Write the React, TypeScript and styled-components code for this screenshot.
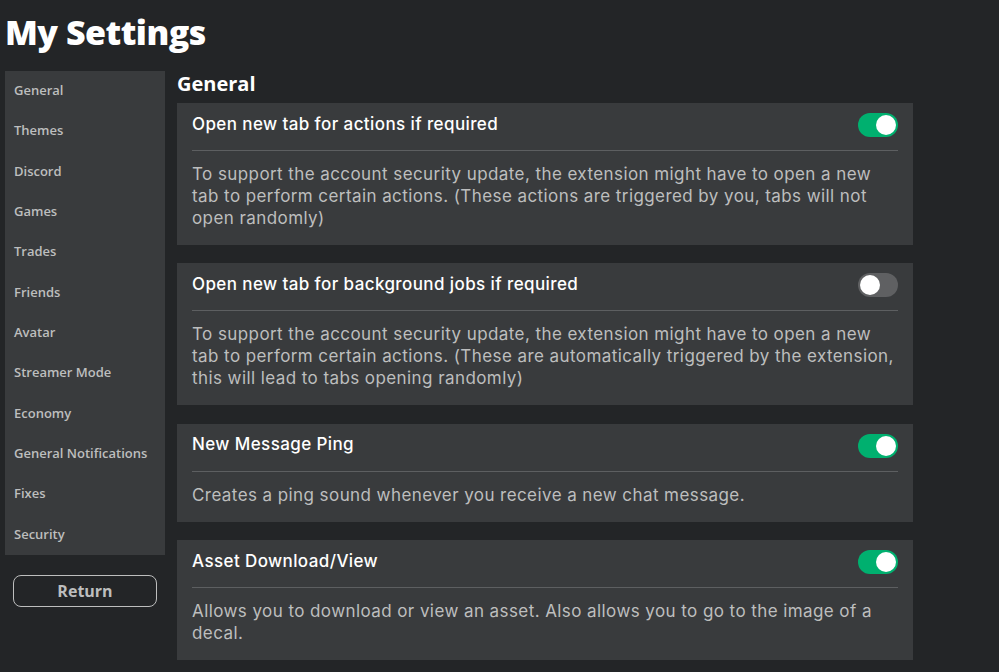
import React from "react";
import styled, { createGlobalStyle } from "styled-components";

const Global = createGlobalStyle`
  html, body { margin: 0; padding: 0; background: #232527; }
  body { font-family: "Inter", "Open Sans", "Liberation Sans", sans-serif; color: #fff; }
  * { box-sizing: border-box; }
`;

const Page = styled.div`
  width: 999px;
  height: 672px;
  overflow: hidden;
  padding: 10px 0 0 5px;
`;

const Title = styled.h1`
  margin: 0;
  height: 44px;
  font-family: "Open Sans", sans-serif;
  font-size: 34px;
  line-height: 44px;
  font-weight: 800;
  letter-spacing: -0.5px;
  color: #fff;
`;

const Layout = styled.div`
  display: flex;
  align-items: flex-start;
  margin-top: 17px;
  gap: 12px;
`;

const Side = styled.div`
  width: 160px;
  display: flex;
  flex-direction: column;
  gap: 20px;
`;

const Nav = styled.nav`
  background: #393b3d;
  display: flex;
  flex-direction: column;
`;

const NavItem = styled.div`
  height: 40.33px;
  line-height: 38px;
  padding: 0 9px;
  font-family: "Open Sans", sans-serif;
  font-size: 13px;
  font-weight: 600;
  color: #bdbebe;
`;

const ReturnButton = styled.button`
  margin-left: 8px;
  width: 144px;
  height: 32px;
  background: transparent;
  border: 1px solid #bdbebe;
  border-radius: 8px;
  color: #bdbebe;
  font-family: "Open Sans", sans-serif;
  font-size: 16px;
  font-weight: 700;
  padding: 0;
`;

const Main = styled.div`
  width: 736px;
  display: flex;
  flex-direction: column;
`;

const SectionTitle = styled.h2`
  margin: 0;
  font-family: "Open Sans", sans-serif;
  font-size: 20px;
  line-height: 26px;
  font-weight: 700;
  color: #fff;
`;

const Cards = styled.div`
  margin-top: 6px;
  display: flex;
  flex-direction: column;
  gap: 18.4px;
`;

const Card = styled.section`
  background: #393b3d;
  padding: 10px 15px 16px;
`;

const CardHead = styled.div`
  display: flex;
  align-items: center;
  justify-content: space-between;
  height: 24px;
  padding-bottom: 13px;
  box-sizing: content-box;
  border-bottom: 1px solid #5d5f61;
`;

const CardTitle = styled.span`
  font-size: 17px;
  font-weight: 500;
  letter-spacing: 0.4px;
  padding-bottom: 3px;
  color: #fff;
`;

const Toggle = styled.div<{ $on: boolean }>`
  position: relative;
  width: 40px;
  height: 24px;
  border-radius: 12px;
  background: ${(p) => (p.$on ? "#00b06f" : "#5f6062")};
  &::after {
    content: "";
    position: absolute;
    top: 2px;
    left: ${(p) => (p.$on ? "18px" : "2px")};
    width: 20px;
    height: 20px;
    border-radius: 50%;
    background: #fff;
  }
`;

const Desc = styled.p`
  margin: 12px 0 0;
  font-size: 17px;
  line-height: 22px;
  letter-spacing: 0.42px;
  color: #bdbebe;
`;

const navItems = [
  "General",
  "Themes",
  "Discord",
  "Games",
  "Trades",
  "Friends",
  "Avatar",
  "Streamer Mode",
  "Economy",
  "General Notifications",
  "Fixes",
  "Security",
];

const settings = [
  {
    title: "Open new tab for actions if required",
    on: true,
    desc: "To support the account security update, the extension might have to open a new tab to perform certain actions. (These actions are triggered by you, tabs will not open randomly)",
  },
  {
    title: "Open new tab for background jobs if required",
    on: false,
    desc: "To support the account security update, the extension might have to open a new tab to perform certain actions. (These are automatically triggered by the extension, this will lead to tabs opening randomly)",
  },
  {
    title: "New Message Ping",
    on: true,
    desc: "Creates a ping sound whenever you receive a new chat message.",
  },
  {
    title: "Asset Download/View",
    on: true,
    desc: "Allows you to download or view an asset. Also allows you to go to the image of a decal.",
  },
];

export default function App() {
  return (
    <>
      <Global />
      <Page>
        <Title>My Settings</Title>
        <Layout>
          <Side>
            <Nav>
              {navItems.map((n) => (
                <NavItem key={n}>{n}</NavItem>
              ))}
            </Nav>
            <ReturnButton>Return</ReturnButton>
          </Side>
          <Main>
            <SectionTitle>General</SectionTitle>
            <Cards>
              {settings.map((s) => (
                <Card key={s.title}>
                  <CardHead>
                    <CardTitle>{s.title}</CardTitle>
                    <Toggle $on={s.on} />
                  </CardHead>
                  <Desc>{s.desc}</Desc>
                </Card>
              ))}
            </Cards>
          </Main>
        </Layout>
      </Page>
    </>
  );
}
